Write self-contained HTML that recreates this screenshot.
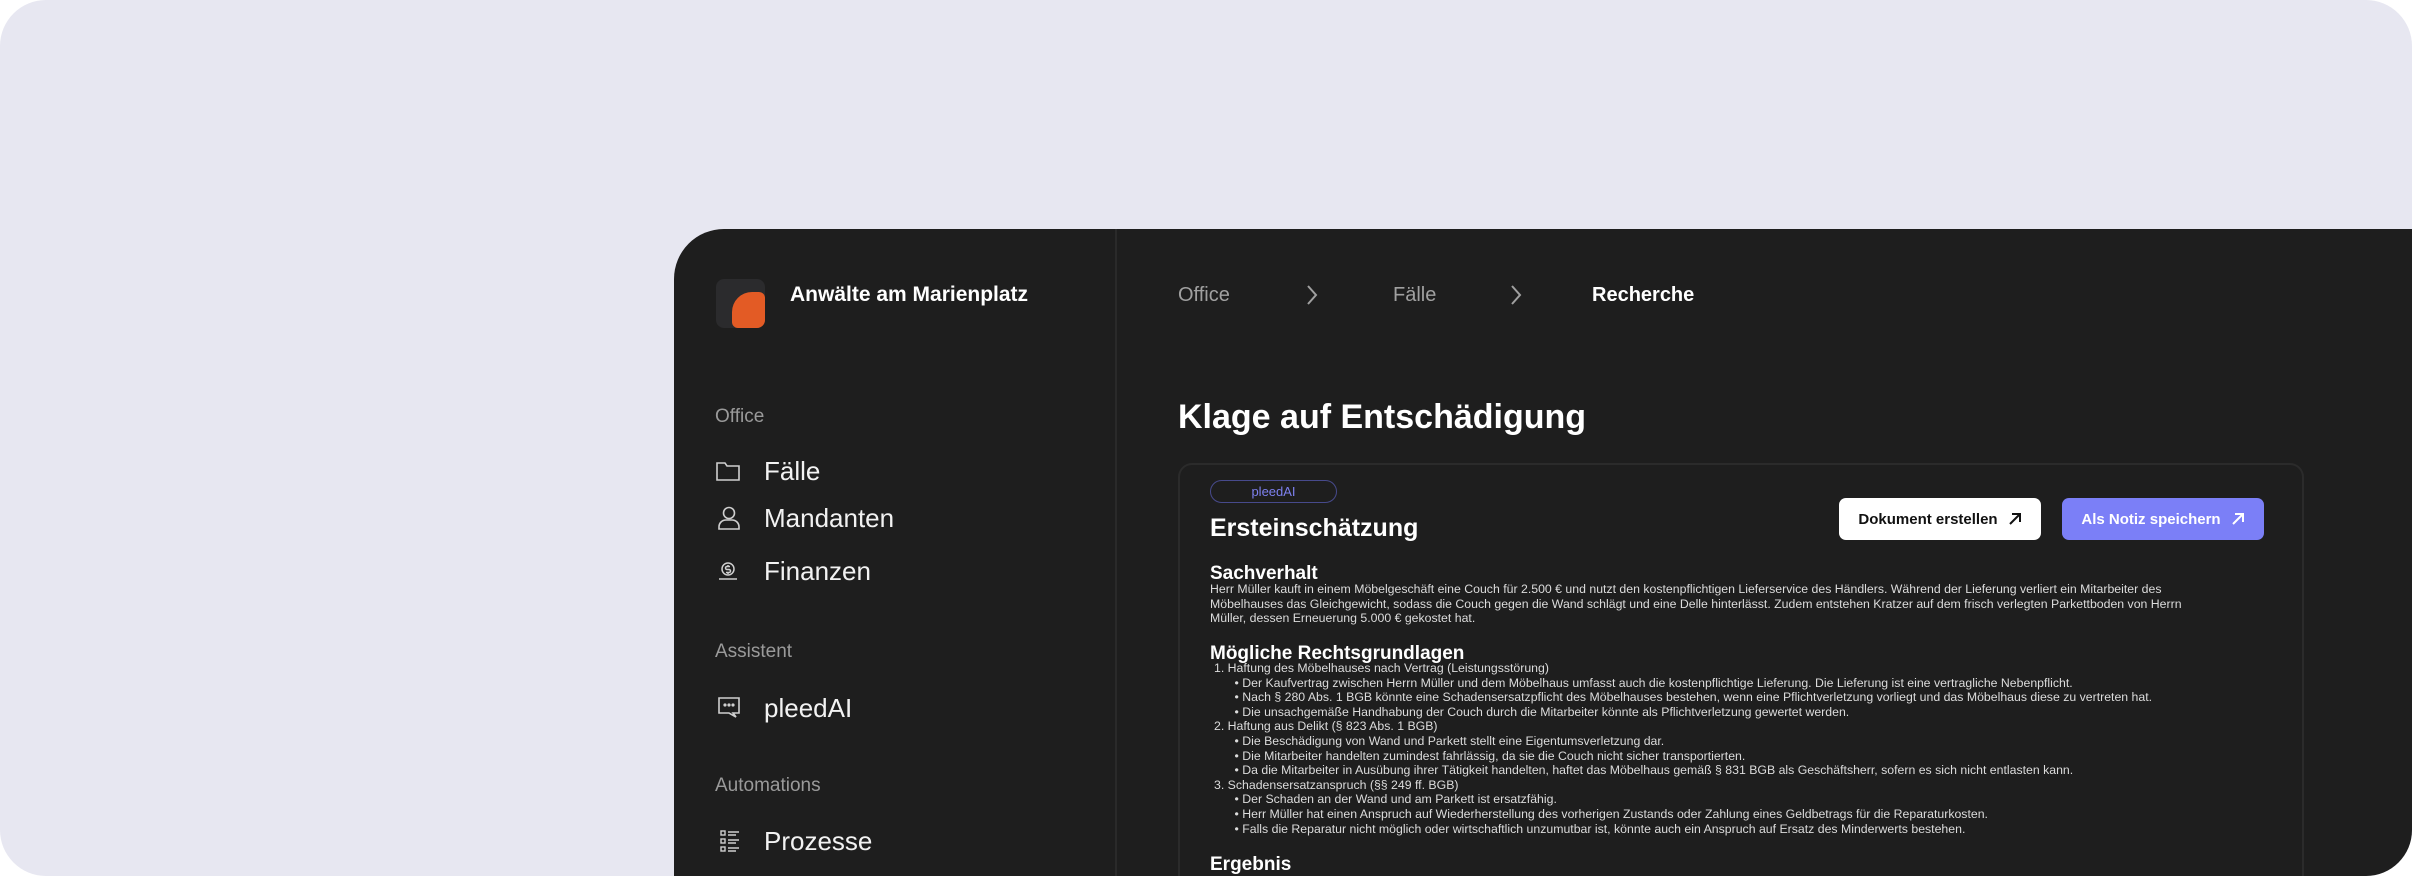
<!DOCTYPE html>
<html><head><meta charset="utf-8"><style>
*{margin:0;padding:0;box-sizing:border-box}
html,body{width:2412px;height:876px;overflow:hidden}
body{background:#fff;font-family:"Liberation Sans",sans-serif;position:relative}
#bg{position:absolute;left:0;top:0;width:2412px;height:876px;background:#e7e7f1;border-radius:46px;overflow:hidden}
#panel{position:absolute;left:674px;top:229px;width:1738px;height:647px;background:#1e1e1e;border-top-left-radius:50px}
.a{position:absolute;white-space:nowrap;line-height:1}
#div{position:absolute;left:1115px;top:229px;width:2px;height:647px;background:#2a2a2a}
.sec{color:#9a9a9a;font-size:19px}
.nav{color:#f2f2f2;font-size:26px}
.bc{color:#a0a0a0;font-size:20px}
#card{position:absolute;left:1178px;top:463px;width:1126px;height:413px;border:2px solid #2b2b2b;border-bottom:none;border-radius:14px 14px 0 0;background:#1e1e1e}
.txt{position:absolute;left:1210px;color:#dcdcdc;font-size:12.3px;line-height:14.6px;white-space:nowrap}
.h{color:#fff;font-size:19px;font-weight:bold;line-height:1}
.btn{position:absolute;top:498px;height:42px;width:202px;border-radius:7px;font-size:15px;font-weight:bold;display:flex;align-items:center;justify-content:center;gap:10px}
</style></head><body>
<div id="bg">
<div id="panel"></div>
<div id="div"></div>
<div style="position:absolute;left:716px;top:279px;width:49px;height:49px;background:#2b2b2d;border-radius:8px;overflow:hidden">
<div style="position:absolute;left:16px;top:13px;width:33px;height:36px;background:#e35b25;border-radius:20px 6px 6px 6px"></div></div>
<div class="a" style="left:790px;top:284px;color:#fff;font-size:21px;font-weight:bold">Anwälte am Marienplatz</div>

<div class="a sec" style="left:715px;top:407px">Office</div>
<svg class="a" style="left:716px;top:461px" width="24" height="20" viewBox="0 0 24 20" fill="none" stroke="#cfcfcf" stroke-width="1.6"><path d="M1 2h8l2 3h12v14H1z"/></svg>
<div class="a nav" style="left:764px;top:458px">Fälle</div>
<svg class="a" style="left:718px;top:506px" width="22" height="24" viewBox="0 0 22 24" fill="none" stroke="#cfcfcf" stroke-width="1.6"><circle cx="11" cy="7" r="5.5"/><path d="M1 23v-2c0-4 3-7 7-7h6c4 0 7 3 7 7v2z"/></svg>
<div class="a nav" style="left:764px;top:505px">Mandanten</div>
<svg class="a" style="left:718px;top:561px" width="20" height="20" viewBox="0 0 20 20" fill="none" stroke="#cfcfcf" stroke-width="1.5"><circle cx="10" cy="8" r="6"/><path d="M1 18h18M12 5.5h-3a1.5 1.5 0 0 0 0 3h2a1.5 1.5 0 0 1 0 3H8M10 4v1.5M10 11.5V13"/></svg>
<div class="a nav" style="left:764px;top:558px">Finanzen</div>

<div class="a sec" style="left:715px;top:642px">Assistent</div>
<svg class="a" style="left:718px;top:697px" width="22" height="21" viewBox="0 0 22 21" fill="none" stroke="#cfcfcf" stroke-width="1.6"><path d="M1 1h20v15h-6l3 4-7-4H1z"/><circle cx="7" cy="8" r=".8" fill="#cfcfcf"/><circle cx="11" cy="8" r=".8" fill="#cfcfcf"/><circle cx="15" cy="8" r=".8" fill="#cfcfcf"/></svg>
<div class="a nav" style="left:764px;top:695px">pleedAI</div>

<div class="a sec" style="left:715px;top:776px">Automations</div>
<svg class="a" style="left:720px;top:830px" width="20" height="22" viewBox="0 0 20 22" fill="none" stroke="#cfcfcf" stroke-width="1.4"><rect x="1" y="1" width="4" height="4"/><rect x="1" y="9" width="4" height="4"/><rect x="1" y="17" width="4" height="4"/><path d="M8 2h11M8 5h8M8 10h11M8 13h8M8 18h11M8 21h8"/></svg>
<div class="a nav" style="left:764px;top:828px">Prozesse</div>

<div class="a bc" style="left:1178px;top:285px">Office</div>
<svg class="a" style="left:1306px;top:284px" width="12" height="22" viewBox="0 0 12 22" fill="none" stroke="#a0a0a0" stroke-width="2"><path d="M2 2l8 9-8 9"/></svg>
<div class="a bc" style="left:1393px;top:285px">Fälle</div>
<svg class="a" style="left:1510px;top:284px" width="12" height="22" viewBox="0 0 12 22" fill="none" stroke="#a0a0a0" stroke-width="2"><path d="M2 2l8 9-8 9"/></svg>
<div class="a bc" style="left:1592px;top:285px;color:#fff;font-weight:bold">Recherche</div>

<div class="a" style="left:1178px;top:400px;color:#fff;font-size:34px;font-weight:bold">Klage auf Entschädigung</div>

<div id="card"></div>
<div class="a" style="left:1210px;top:480px;width:127px;height:23px;border:1.5px solid #474a8c;border-radius:12px;color:#7d80ee;font-size:13px;display:flex;align-items:center;justify-content:center">pleedAI</div>
<div class="a" style="left:1210px;top:516px;color:#fff;font-size:25px;font-weight:bold">Ersteinschätzung</div>
<div class="btn" style="left:1839px;background:#fff;color:#111">Dokument erstellen <svg width="14" height="14" viewBox="0 0 14 14" fill="none" stroke="#111" stroke-width="2"><path d="M2 12L12 2M4 2h8v8"/></svg></div>
<div class="btn" style="left:2062px;background:#7b7ff7;color:#fff">Als Notiz speichern <svg width="14" height="14" viewBox="0 0 14 14" fill="none" stroke="#fff" stroke-width="2"><path d="M2 12L12 2M4 2h8v8"/></svg></div>

<div class="a h" style="left:1210px;top:564px">Sachverhalt</div>
<div class="txt" style="top:582px">Herr Müller kauft in einem Möbelgeschäft eine Couch für 2.500 € und nutzt den kostenpflichtigen Lieferservice des Händlers. Während der Lieferung verliert ein Mitarbeiter des<br>Möbelhauses das Gleichgewicht, sodass die Couch gegen die Wand schlägt und eine Delle hinterlässt. Zudem entstehen Kratzer auf dem frisch verlegten Parkettboden von Herrn<br>Müller, dessen Erneuerung 5.000 € gekostet hat.</div>

<div class="a h" style="left:1210px;top:644px">Mögliche Rechtsgrundlagen</div>
<div class="txt" style="top:661px;left:1214px">1. Haftung des Möbelhauses nach Vertrag (Leistungsstörung)<br>
&nbsp;&nbsp;&nbsp;&nbsp;&nbsp;&nbsp;• Der Kaufvertrag zwischen Herrn Müller und dem Möbelhaus umfasst auch die kostenpflichtige Lieferung. Die Lieferung ist eine vertragliche Nebenpflicht.<br>
&nbsp;&nbsp;&nbsp;&nbsp;&nbsp;&nbsp;• Nach § 280 Abs. 1 BGB könnte eine Schadensersatzpflicht des Möbelhauses bestehen, wenn eine Pflichtverletzung vorliegt und das Möbelhaus diese zu vertreten hat.<br>
&nbsp;&nbsp;&nbsp;&nbsp;&nbsp;&nbsp;• Die unsachgemäße Handhabung der Couch durch die Mitarbeiter könnte als Pflichtverletzung gewertet werden.<br>
2. Haftung aus Delikt (§ 823 Abs. 1 BGB)<br>
&nbsp;&nbsp;&nbsp;&nbsp;&nbsp;&nbsp;• Die Beschädigung von Wand und Parkett stellt eine Eigentumsverletzung dar.<br>
&nbsp;&nbsp;&nbsp;&nbsp;&nbsp;&nbsp;• Die Mitarbeiter handelten zumindest fahrlässig, da sie die Couch nicht sicher transportierten.<br>
&nbsp;&nbsp;&nbsp;&nbsp;&nbsp;&nbsp;• Da die Mitarbeiter in Ausübung ihrer Tätigkeit handelten, haftet das Möbelhaus gemäß § 831 BGB als Geschäftsherr, sofern es sich nicht entlasten kann.<br>
3. Schadensersatzanspruch (§§ 249 ff. BGB)<br>
&nbsp;&nbsp;&nbsp;&nbsp;&nbsp;&nbsp;• Der Schaden an der Wand und am Parkett ist ersatzfähig.<br>
&nbsp;&nbsp;&nbsp;&nbsp;&nbsp;&nbsp;• Herr Müller hat einen Anspruch auf Wiederherstellung des vorherigen Zustands oder Zahlung eines Geldbetrags für die Reparaturkosten.<br>
&nbsp;&nbsp;&nbsp;&nbsp;&nbsp;&nbsp;• Falls die Reparatur nicht möglich oder wirtschaftlich unzumutbar ist, könnte auch ein Anspruch auf Ersatz des Minderwerts bestehen.</div>

<div class="a h" style="left:1210px;top:855px">Ergebnis</div>
</div>
</body></html>
